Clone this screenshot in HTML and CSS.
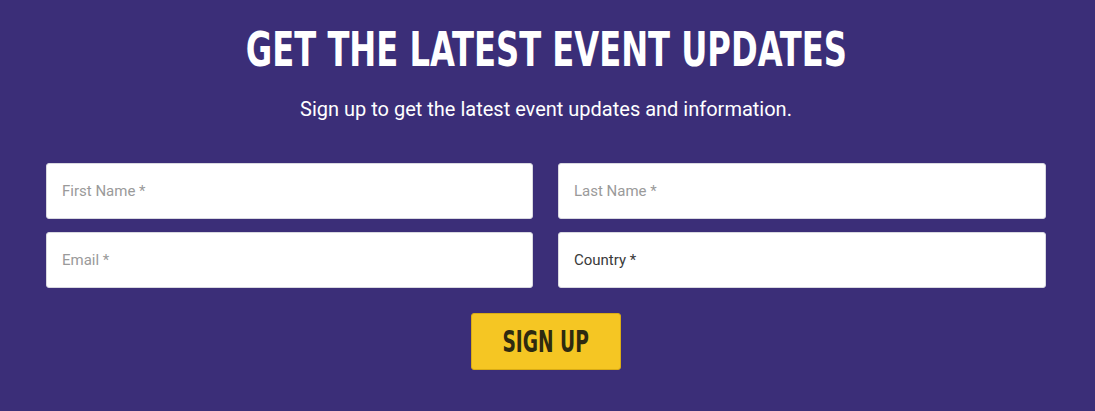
FILE: index.html
```html
<!DOCTYPE html>
<html>
<head>
<meta charset="utf-8">
<link rel="stylesheet" href="styles.css">
</head>
<body>
<section class="signup">
  <h1 class="title"><span class="squeeze">GET THE LATEST EVENT UPDATES</span></h1>
  <p class="lead">Sign up to get the latest event updates and information.</p>
  <form class="form">
    <div class="grid">
      <input class="field" type="text" placeholder="First Name *">
      <input class="field" type="text" placeholder="Last Name *">
      <input class="field" type="email" placeholder="Email *">
      <div class="field select">Country *</div>
    </div>
    <div class="actions">
      <button class="btn" type="button"><span class="squeeze">SIGN UP</span></button>
    </div>
  </form>
</section>
</body>
</html>
```

FILE: styles.css
```css
* { box-sizing: border-box; }
html, body { margin: 0; padding: 0; }
body {
  background: #3b2e78;
  font-family: Roboto, "Liberation Sans", sans-serif;
  width: 1095px;
  height: 411px;
  overflow: hidden;
}
.signup {
  padding: 22px 49px 0 46px;
}
.title {
  margin: 0;
  text-align: center;
  color: #fff;
  font-family: "DejaVu Sans Condensed", "DejaVu Sans", sans-serif;
  font-weight: 700;
  font-size: 48px;
  line-height: 54px;
  letter-spacing: 0;
}
.squeeze {
  display: inline-block;
  transform: scaleX(0.745);
  transform-origin: center;
  white-space: nowrap;
}
.title .squeeze { margin: 0 -110px; }
.lead {
  margin: 21px 0 0;
  text-align: center;
  color: #fff;
  font-size: 20px;
  line-height: 24px;
}
.form { margin-top: 42px; }
.grid {
  display: grid;
  grid-template-columns: 487px 488px;
  column-gap: 25px;
  row-gap: 13px;
}
.field {
  height: 56px;
  border: 1px solid #d8d8e0;
  border-radius: 3px;
  background: #fff;
  padding: 0 15px;
  font-family: Roboto, sans-serif;
  font-weight: 400;
  font-size: 15px;
  color: #333;
  outline: none;
}
.field::placeholder { color: #9a9a9a; }
.select {
  display: flex;
  align-items: center;
  color: #3a3a3a;
}
.actions {
  display: flex;
  justify-content: center;
  margin-top: 25px;
}
.btn {
  width: 150px;
  height: 57px;
  background: #f5c623;
  border: 1px solid #d9ab14;
  border-radius: 3px;
  color: #2e2a10;
  font-family: "DejaVu Sans Condensed", "DejaVu Sans", sans-serif;
  font-weight: 700;
  font-size: 30px;
  padding: 0;
  cursor: pointer;
}
.btn .squeeze { transform: scaleX(0.69); margin: 0 -20px; }
```
